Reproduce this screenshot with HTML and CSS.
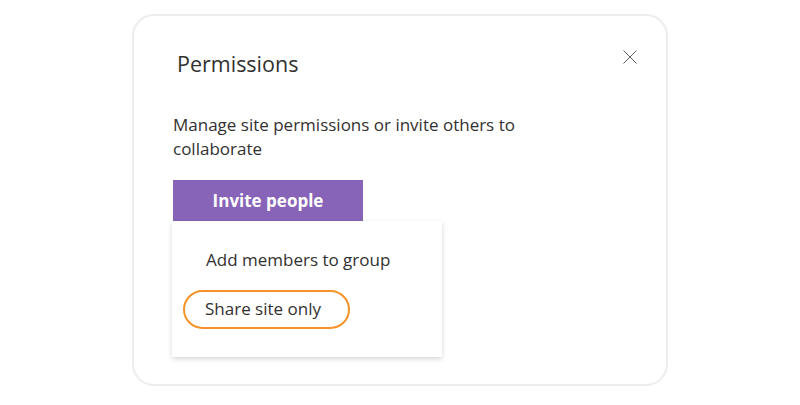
FILE: index.html
```html
<!DOCTYPE html>
<html>
<head>
<meta charset="utf-8">
<link rel="stylesheet" href="styles.css">
</head>
<body>
<div class="card">
  <div class="header">
    <h1 class="title">Permissions</h1>
    <button class="close" aria-label="Close">
      <svg width="14" height="14" viewBox="0 0 14 14"><path d="M0.5 0.5 L13.5 13.5 M13.5 0.5 L0.5 13.5" stroke="#605e5c" stroke-width="1" fill="none"/></svg>
    </button>
  </div>
  <p class="desc">Manage site permissions or invite others to collaborate</p>
  <div class="actions">
    <button class="invite">Invite people</button>
    <div class="menu">
      <div class="item">Add members to group</div>
      <div class="item"><span class="highlight">Share site only</span></div>
    </div>
  </div>
</div>
</body>
</html>
```
FILE: styles.css
```css
html, body {
  margin: 0;
  padding: 0;
  background: #ffffff;
}
body {
  font-family: "Open Sans", "Noto Sans", sans-serif;
  color: #323130;
}
.card {
  box-sizing: border-box;
  width: 536px;
  height: 372px;
  margin: 14px auto 0;
  border: 2px solid #ececec;
  border-radius: 22px;
  padding: 0 39px;
  background: #fff;
}
.header {
  display: flex;
  justify-content: space-between;
  align-items: flex-start;
  padding-top: 33px;
}
.title {
  margin: 0 0 0 4px;
  font-size: 21.5px;
  font-weight: 400;
  line-height: 30px;
  color: #323130;
}
.close {
  margin: 1px -10px 0 0;
  padding: 0;
  border: 0;
  background: transparent;
  width: 14px;
  height: 14px;
  display: flex;
}
.desc {
  margin: 34px 0 0;
  font-size: 17px;
  line-height: 24px;
  width: 380px;
  color: #323130;
}
.actions {
  margin-top: 19px;
  display: flex;
  flex-direction: column;
  align-items: flex-start;
}
.invite {
  width: 190px;
  height: 41px;
  border: 0;
  background: #8764b8;
  color: #fff;
  font-family: "Open Sans", "Noto Sans", sans-serif;
  font-weight: 700;
  font-size: 17px;
  padding: 0;
  margin: 0;
}
.menu {
  margin-left: -1px;
  width: 270px;
  box-sizing: border-box;
  padding: 19px 0 28px 0;
  background: #fff;
  box-shadow: 0 2px 5px rgba(0,0,0,0.16);
  display: flex;
  flex-direction: column;
  gap: 9px;
}
.item {
  font-size: 17px;
  line-height: 40px;
  height: 40px;
  padding-left: 34px;
  color: #323130;
}
.highlight {
  display: inline-block;
  box-sizing: border-box;
  margin-left: -23px;
  height: 39px;
  line-height: 34px;
  padding: 0 27px 0 20px;
  border: 2.5px solid #f7922a;
  border-radius: 20px;
}
```
